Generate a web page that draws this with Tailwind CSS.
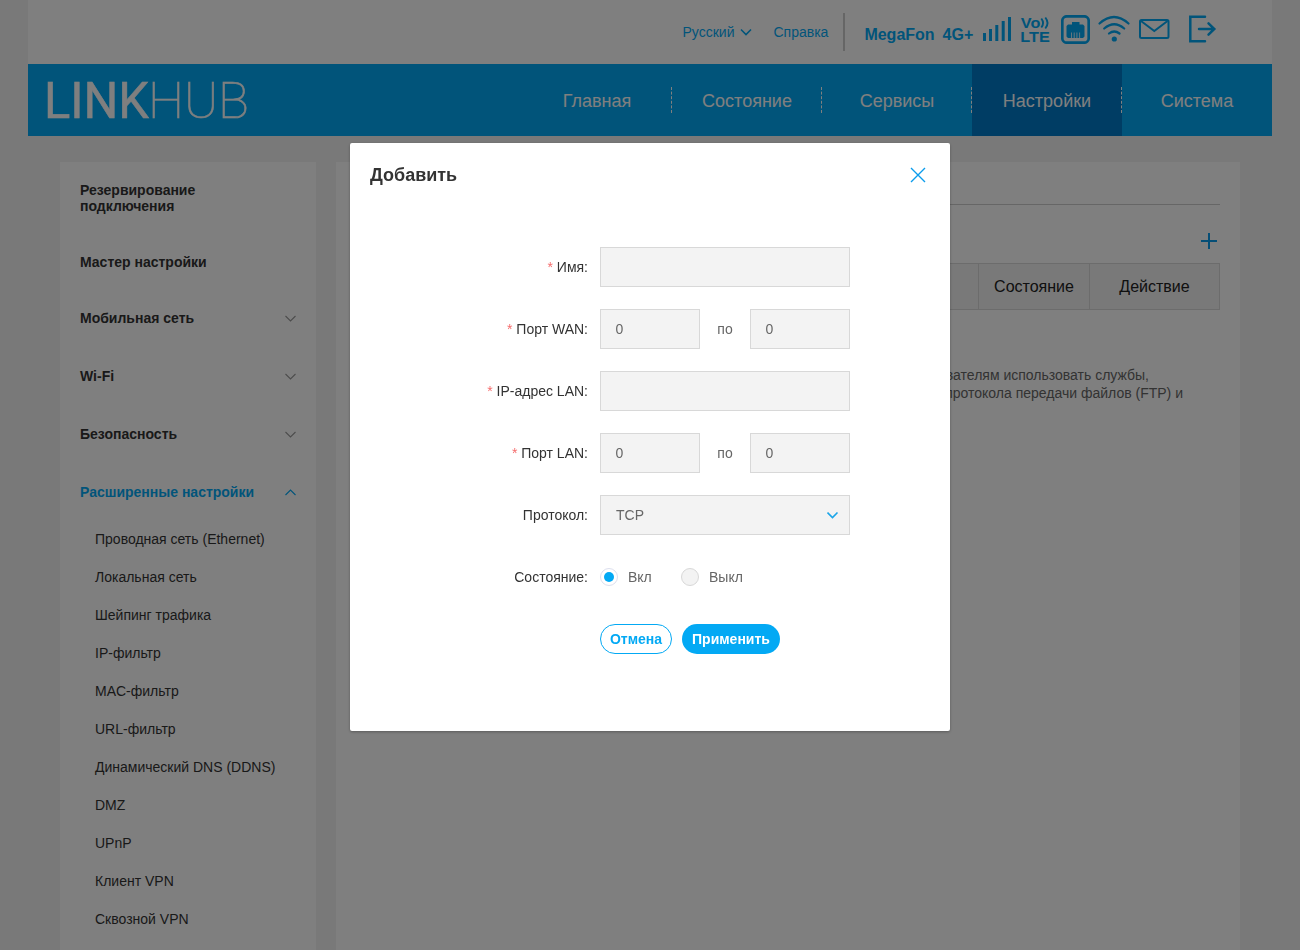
<!DOCTYPE html>
<html lang="ru">
<head>
    <meta charset="UTF-8">
    <meta name="viewport" content="width=device-width, initial-scale=1.0">
    <title>LINKHUB</title>
    <script src="https://cdn.jsdelivr.net/npm/@tailwindcss/browser@4"></script>
    <style>
        body {
            font-family: 'Liberation Sans', Arial, sans-serif;
        }
    </style>
</head>
<body class="h-[950px] overflow-hidden bg-[#f3f3f3] text-sm text-[#333]">
    <div class="mx-auto w-[1244px]">
        <!-- Status bar -->
        <header class="flex h-16 items-start bg-white pl-[654.5px] text-[#03a9f4]">
            <a href="#" class="mt-[22px] flex items-center leading-5">
                Русский
                <svg class="ml-1.5 h-3 w-3" viewBox="0 0 12 12" fill="none" stroke="currentColor" stroke-width="1.6"><path d="M1 3.500l5 5 5-5"/></svg>
            </a>
            <a href="#" class="mt-[22px] ml-[21px] leading-5">Справка</a>
            <div class="mt-[13px] ml-[15px] h-[38px] w-0.5 bg-[#ccc]"></div>
            <span class="mt-[25px] ml-[19px] text-base leading-5 font-bold">MegaFon</span>
            <span class="mt-[25px] ml-2 text-base leading-5 font-bold">4G+</span>
            <!-- Signal -->
            <svg class="mt-[16px] ml-[9px] h-[26px] w-[30px] shrink-0" viewBox="982 16 30 26" fill="currentColor">
                <path d="M983 33h3v8h-3zM989 29h3v12h-3zM995.300 25h3v16h-3zM1001.700 21h3v20h-3zM1008 17h3v24h-3z"/>
            </svg>
            <!-- VoLTE -->
            <svg class="mt-[13px] ml-[8px] h-[33px] w-[31px] shrink-0" viewBox="1020 13 31 33" fill="currentColor">
                <text x="1020.800" y="28" font-size="14.500" font-weight="bold" textLength="19.500" lengthAdjust="spacingAndGlyphs">Vo</text>
                <text x="1020.300" y="42" font-size="15.500" font-weight="bold" textLength="29.500" lengthAdjust="spacingAndGlyphs">LTE</text>
                <path d="M1041.300 18.500q3.500 4.500 0 9M1045.300 17.500q4.500 5.500 0 11" fill="none" stroke="currentColor" stroke-width="1.900"/>
            </svg>
            <!-- Ethernet -->
            <svg class="mt-[15px] ml-[10px] h-[29px] w-[29px] shrink-0" viewBox="1061 15 29 29">
                <rect x="1062.300" y="16.300" width="26.400" height="26.400" rx="4.500" fill="none" stroke="currentColor" stroke-width="2.700"/>
                <path fill="currentColor" d="M1072 22h7.500v2.500h3.500l1.500 1.500v10.500l-1.500 1.500h-15l-1.500-1.500v-10.500l1.500-1.500h4z"/>
                <path stroke="#fff" stroke-width="0.800" d="M1071.500 32.500v5.500M1074.200 32.500v5.500M1076.900 32.500v5.500M1079.600 32.500v5.500"/>
            </svg>
            <!-- Wi-Fi -->
            <svg class="mt-[15px] ml-[8px] h-[29px] w-8 shrink-0" viewBox="1098 15 32 29" fill="none" stroke="currentColor" stroke-width="2.200" stroke-linecap="round">
                <path d="M1099.500 23.500q14.500-13 29 0M1104.200 28.500q10-8.500 20 0M1109 33.500q5.200-4 10.500 0"/>
                <circle cx="1114.300" cy="39" r="2.600" fill="currentColor" stroke="none"/>
            </svg>
            <!-- Messages -->
            <svg class="mt-[18px] ml-[8px] h-[22px] w-8 shrink-0" viewBox="1138 18 32 22" fill="none" stroke="currentColor" stroke-width="2">
                <rect x="1140" y="20" width="28.500" height="18" rx="1.500"/>
                <path d="M1141 21l13.300 10L1167.500 21"/>
            </svg>
            <!-- Logout -->
            <svg class="mt-[15px] ml-[18px] h-[29px] w-[29px] shrink-0" viewBox="1188 15 29 29" fill="none" stroke="currentColor" stroke-width="2.500" stroke-linecap="round">
                <path d="M1205 16.700h-14.700v24.600h14.700"/>
                <path d="M1199 29h15M1208.500 23.300l5.800 5.700-5.800 5.700"/>
            </svg>
        </header>

        <!-- Main navigation -->
        <nav class="flex h-18 justify-between bg-[#03a9f4] text-white">
            <svg class="ml-4 h-18 w-[210px]" viewBox="0 0 210 72" fill="currentColor" stroke="currentColor" font-family="Roboto" font-size="50.600">
                <text x="0" y="54" font-weight="400" stroke-width="0.500" textLength="105" lengthAdjust="spacingAndGlyphs">LINK</text>
                <text x="104" y="54" font-weight="100" stroke-width="0.600" textLength="101" lengthAdjust="spacingAndGlyphs">HUB</text>
            </svg>
            <div class="flex text-lg">
                <a href="#" class="flex w-[150px] items-center"><span class="flex h-[26px] w-full items-center justify-center border-r border-dashed border-white pt-0.5 pl-px">Главная</span></a>
                <a href="#" class="flex w-[150px] items-center"><span class="flex h-[26px] w-full items-center justify-center border-r border-dashed border-white pt-0.5 pl-px">Состояние</span></a>
                <a href="#" class="flex w-[150px] items-center"><span class="flex h-[26px] w-full items-center justify-center border-r border-dashed border-white pt-0.5 pl-px">Сервисы</span></a>
                <a href="#" class="flex w-[150px] items-center bg-[#007ac8]"><span class="flex h-[26px] w-full items-center justify-center border-r border-dashed border-white pt-0.5 pl-px">Настройки</span></a>
                <a href="#" class="flex w-[150px] items-center justify-center pt-0.5">Система</a>
            </div>
        </nav>

        <div class="mt-[26px] flex gap-5 px-8">
            <!-- Sidebar -->
            <aside class="h-[800px] w-64 shrink-0 bg-white px-5">
                <ul class="font-bold">
                    <li class="flex h-[72px] items-center leading-4">Резервирование<br>подключения</li>
                    <li class="flex h-[55px] items-center">Мастер настройки</li>
                    <li class="flex h-[58px] items-center justify-between">Мобильная сеть
                        <svg class="-mr-px h-3 w-3" viewBox="0 0 12 12" fill="none" stroke="#999" stroke-width="1.1"><path d="M.5 4l5 5 5-5"/></svg>
                    </li>
                    <li class="flex h-[58px] items-center justify-between">Wi-Fi
                        <svg class="-mr-px h-3 w-3" viewBox="0 0 12 12" fill="none" stroke="#999" stroke-width="1.1"><path d="M.5 4l5 5 5-5"/></svg>
                    </li>
                    <li class="flex h-[58px] items-center justify-between">Безопасность
                        <svg class="-mr-px h-3 w-3" viewBox="0 0 12 12" fill="none" stroke="#999" stroke-width="1.1"><path d="M.5 4l5 5 5-5"/></svg>
                    </li>
                    <li class="flex h-[58px] items-center justify-between text-[#03a9f4]">Расширенные настройки
                        <svg class="-mr-px h-3 w-3" viewBox="0 0 12 12" fill="none" stroke="currentColor" stroke-width="1.1"><path d="M.5 9l5-5 5 5"/></svg>
                    </li>
                </ul>
                <ul class="-mt-px pl-[15px] leading-[38px]">
                    <li>Проводная сеть (Ethernet)</li>
                    <li>Локальная сеть</li>
                    <li>Шейпинг трафика</li>
                    <li>IP-фильтр</li>
                    <li>MAC-фильтр</li>
                    <li>URL-фильтр</li>
                    <li>Динамический DNS (DDNS)</li>
                    <li>DMZ</li>
                    <li>UPnP</li>
                    <li>Клиент VPN</li>
                    <li>Сквозной VPN</li>
                </ul>
            </aside>

            <!-- Port forwarding -->
            <main class="h-[800px] grow bg-white px-5">
                <h2 class="h-[43px] border-b border-[#ccc] pt-1 text-base">Виртуальный сервер</h2>
                <div class="flex h-[58px] items-center justify-end pt-[14px] pr-[3px]">
                    <svg class="h-4 w-4" viewBox="0 0 16 16" fill="none" stroke="#0b9cec" stroke-width="2"><path d="M8 0v16M0 8h16"/></svg>
                </div>
                <div class="flex h-[47px] items-center border border-[#d8d8d8] bg-[#f3f3f3] text-base text-[#222]">
                    <div class="h-full grow border-r border-[#d8d8d8]"></div>
                    <div class="flex h-full w-[111px] items-center justify-center border-r border-[#d8d8d8]">Состояние</div>
                    <div class="flex h-full w-[129px] items-center justify-center">Действие</div>
                </div>
                <div class="mt-[56px] text-right leading-[18px] text-[#666]">
                    <p class="pr-[71px]">Виртуальный сервер позволяет внешним пользователям использовать службы,</p>
                    <p class="pr-[37px]">предоставляемые в локальной сети, например протокола передачи файлов (FTP) и</p>
                </div>
            </main>
        </div>
    </div>

    <!-- Modal -->
    <div class="fixed inset-0 bg-black/50">
        <div class="mx-auto mt-[143px] h-[588px] w-[600px] rounded-xs bg-white px-5 shadow-[0_1px_3px_rgba(0,0,0,0.3)]">
            <div class="flex h-16 items-center justify-between">
                <h3 class="text-lg font-bold">Добавить</h3>
                <svg class="mr-1 h-4 w-4" viewBox="0 0 16 16" fill="none" stroke="#0b9cec" stroke-width="1.400"><path d="M1 1l14 14M15 1L1 15"/></svg>
            </div>
            <form class="mt-10 flex flex-col gap-[22px] text-[#666]">
                <div class="flex h-10 items-center">
                    <label class="w-[218px] text-right text-[#333]"><span class="text-[#f56c6c]">*</span> Имя:</label>
                    <input type="text" class="ml-3 h-10 w-[250px] border border-[#d8d8d8] bg-[#f3f3f3] px-[15px]">
                </div>
                <div class="flex h-10 items-center">
                    <label class="w-[218px] text-right text-[#333]"><span class="text-[#f56c6c]">*</span> Порт WAN:</label>
                    <input type="text" value="0" class="ml-3 h-10 w-[100px] border border-[#d8d8d8] bg-[#f3f3f3] px-[14.5px]">
                    <span class="w-[50px] text-center">по</span>
                    <input type="text" value="0" class="h-10 w-[100px] border border-[#d8d8d8] bg-[#f3f3f3] px-[14.5px]">
                </div>
                <div class="flex h-10 items-center">
                    <label class="w-[218px] text-right text-[#333]"><span class="text-[#f56c6c]">*</span> IP-адрес LAN:</label>
                    <input type="text" class="ml-3 h-10 w-[250px] border border-[#d8d8d8] bg-[#f3f3f3] px-[15px]">
                </div>
                <div class="flex h-10 items-center">
                    <label class="w-[218px] text-right text-[#333]"><span class="text-[#f56c6c]">*</span> Порт LAN:</label>
                    <input type="text" value="0" class="ml-3 h-10 w-[100px] border border-[#d8d8d8] bg-[#f3f3f3] px-[14.5px]">
                    <span class="w-[50px] text-center">по</span>
                    <input type="text" value="0" class="h-10 w-[100px] border border-[#d8d8d8] bg-[#f3f3f3] px-[14.5px]">
                </div>
                <div class="flex h-10 items-center">
                    <label class="w-[218px] text-right text-[#333]">Протокол:</label>
                    <div class="ml-3 flex h-10 w-[250px] items-center justify-between border border-[#d8d8d8] bg-[#f3f3f3] pr-[10px] pl-[15px]">
                        TCP
                        <svg class="h-3 w-3" viewBox="0 0 12 12" fill="none" stroke="#1ba5e8" stroke-width="1.600"><path d="M.5 3.500l5 5 5-5"/></svg>
                    </div>
                </div>
                <div class="flex h-10 items-center">
                    <label class="w-[218px] text-right text-[#333]">Состояние:</label>
                    <span class="ml-3 flex h-[18px] w-[18px] items-center justify-center rounded-full border border-[#dcdfee] bg-white"><span class="h-[10px] w-[10px] rounded-full bg-[#03a9f4]"></span></span>
                    <span class="ml-[10px] w-[53px]">Вкл</span>
                    <span class="h-[18px] w-[18px] rounded-full border border-[#d8d8d8] bg-[#f3f3f3]"></span>
                    <span class="ml-[10px]">Выкл</span>
                </div>
                <div class="flex h-10 items-center gap-[10px] pl-[230px] font-bold">
                    <button type="button" class="h-[30px] w-[72px] rounded-full border border-[#03a9f4] text-[#03a9f4]">Отмена</button>
                    <button type="button" class="h-[30px] w-[98px] rounded-full bg-[#03a9f4] text-white">Применить</button>
                </div>
            </form>
        </div>
    </div>
</body>
</html>
